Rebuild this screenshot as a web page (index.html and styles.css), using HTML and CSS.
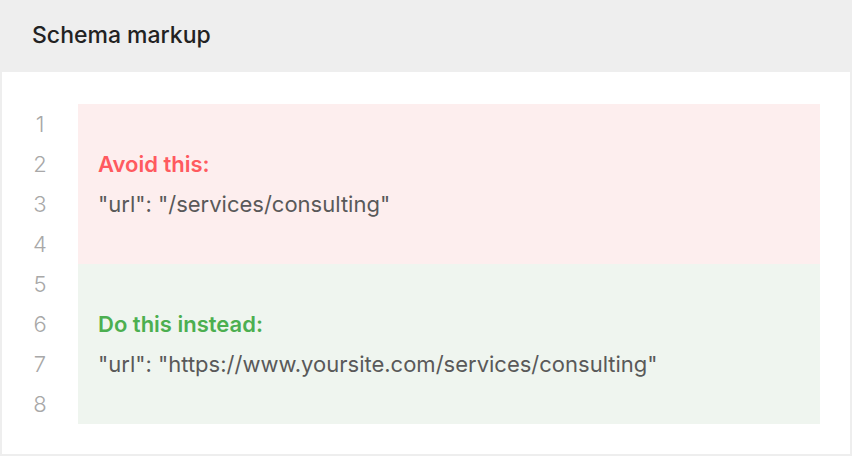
FILE: index.html
```html
<!DOCTYPE html>
<html>
<head>
<meta charset="utf-8">
<link rel="stylesheet" href="styles.css">
</head>
<body>
<div class="card">
  <div class="header">Schema markup</div>
  <div class="body">
    <div class="gutter">
      <span>1</span><span>2</span><span>3</span><span>4</span>
      <span>5</span><span>6</span><span>7</span><span>8</span>
    </div>
    <div class="code">
      <div class="block bad">
        <div class="line"></div>
        <div class="line label">Avoid this:</div>
        <div class="line">"url": "/services/consulting"</div>
        <div class="line"></div>
      </div>
      <div class="block good">
        <div class="line"></div>
        <div class="line label">Do this instead:</div>
        <div class="line">"url": "https://www.yoursite.com/services/consulting"</div>
        <div class="line"></div>
      </div>
    </div>
  </div>
</div>
</body>
</html>
```

FILE: styles.css
```css
* { box-sizing: border-box; }
html, body { margin: 0; padding: 0; }
body {
  width: 852px;
  height: 456px;
  background: #eeeeee;
  font-family: Inter, "Noto Sans", sans-serif;
}
.card {
  display: flex;
  flex-direction: column;
  height: 456px;
  padding: 0 2px 2px 2px;
}
.header {
  height: 72px;
  padding-left: 30px;
  padding-bottom: 2px;
  display: flex;
  align-items: center;
  font-size: 23px;
  font-weight: 500;
  color: #222;
}
.body {
  flex: 1;
  background: #fff;
  display: flex;
  padding-top: 32px;
}
.gutter {
  width: 76px;
  display: flex;
  flex-direction: column;
}
.gutter span {
  height: 40px;
  line-height: 40px;
  text-align: center;
  font-size: 22px;
  font-weight: 300;
  color: #a8a8a8;
}
.code {
  width: 742px;
  display: flex;
  flex-direction: column;
}
.block { padding-left: 20px; }
.bad { background: #fdeeee; }
.good { background: #eff5ef; }
.line {
  height: 40px;
  line-height: 40px;
  font-size: 22px;
  color: #595959;
  white-space: nowrap;
}
.label { font-weight: 600; }
.bad .label { color: #ff5a5f; }
.good .label { color: #4caf50; }
```
